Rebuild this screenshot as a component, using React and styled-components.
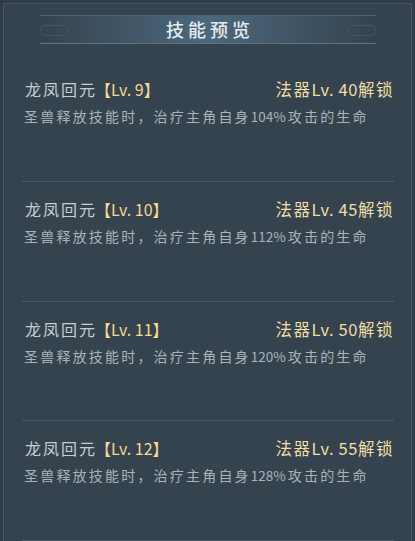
import React from 'react';
import styled, {createGlobalStyle} from "styled-components";

const skills = [
    {lv: 9, unlock: 40, pct: 104},
    {lv: 10, unlock: 45, pct: 112},
    {lv: 11, unlock: 50, pct: 120},
    {lv: 12, unlock: 55, pct: 128},
];

const App = () => {
    return (
        <>
            <GlobalStyle/>
            <Panel>
                <Header>
                    <TitleBar>
                        <Pill/>
                        <Title>技能预览</Title>
                        <Pill/>
                    </TitleBar>
                </Header>
                <List>
                    {skills.map((item) => (
                        <Row key={item.lv}>
                            <Top>
                                <Name>
                                    龙凤回元<Level>【Lv. {item.lv}】</Level>
                                </Name>
                                <Unlock>法器<Num>Lv. {item.unlock}</Num>解锁</Unlock>
                            </Top>
                            <Desc>
                                圣兽释放技能时，治疗主角自身<Pct>{item.pct}%</Pct>攻击的生命
                            </Desc>
                        </Row>
                    ))}
                </List>
            </Panel>
        </>
    )
};

const GlobalStyle = createGlobalStyle`
  html, body {
    margin: 0;
    padding: 0;
    background: #34424e;
  }
  body {
    font-family: "Noto Sans CJK SC", "Noto Sans", sans-serif;
  }
`;

const Panel = styled.div`
  position: relative;
  width: 415px;
  height: 541px;
  box-sizing: border-box;
  background: #35434f;
  border-top: 3px solid #303d48;
  border-left: 3px solid #303d48;
  border-right: 3px solid #303d48;
  box-shadow: inset 1px 1px 0 #465765, inset -1px 0 0 #465765;
  display: flex;
  flex-direction: column;
  overflow: hidden;
`;

const Header = styled.div`
  height: 59px;
  flex-shrink: 0;
  padding-top: 12px;
  box-sizing: border-box;
`;

const TitleBar = styled.div`
  height: 27px;
  margin: 0 36px 0 37px;
  display: flex;
  align-items: center;
  justify-content: space-between;
  border-top: 1px solid #4b6273;
  border-bottom: 1px solid #5a7689;
  background: linear-gradient(90deg,
    rgba(74, 100, 120, 0) 0%,
    rgba(74, 100, 120, 0.55) 25%,
    rgba(78, 108, 130, 0.9) 50%,
    rgba(74, 100, 120, 0.55) 75%,
    rgba(74, 100, 120, 0) 100%);
`;

const Pill = styled.div`
  width: 26px;
  height: 9px;
  margin-top: 2px;
  border: 1px solid #435766;
  border-radius: 5px;
`;

const Title = styled.div`
  font-size: 18px;
  font-weight: 500;
  letter-spacing: 4px;
  padding-left: 4px;
  color: #e6ecf0;
  line-height: 27px;
`;

const List = styled.div`
  flex: 1;
  display: flex;
  flex-direction: column;
  padding: 0 18px 0 19px;
`;

const Row = styled.div`
  height: 119.5px;
  box-sizing: border-box;
  padding-top: 14px;
  border-bottom: 1px solid #4a5966;
  &:first-child {
    height: 120px;
  }
`;

const Top = styled.div`
  display: flex;
  justify-content: space-between;
  align-items: center;
  height: 26px;
`;

const Name = styled.div`
  font-size: 16px;
  letter-spacing: 2px;
  color: #c7ccd1;
  padding-left: 3px;
`;

const Level = styled.span`
  color: #f2d994;
  letter-spacing: 0;
  margin-left: -2px;
`;

const Unlock = styled.div`
  font-size: 16.5px;
  color: #f1dea6;
  letter-spacing: 1.5px;
`;

const Num = styled.span`
  letter-spacing: 0.6px;
`;

const Desc = styled.div`
  margin-top: 2px;
  padding-left: 2px;
  font-size: 14px;
  letter-spacing: 2.2px;
  color: #a9b2bb;
  line-height: 24px;
  white-space: nowrap;
`;

const Pct = styled.span`
  font-size: 13.5px;
  letter-spacing: 0;
  margin-right: 2px;
`;

export default App;
